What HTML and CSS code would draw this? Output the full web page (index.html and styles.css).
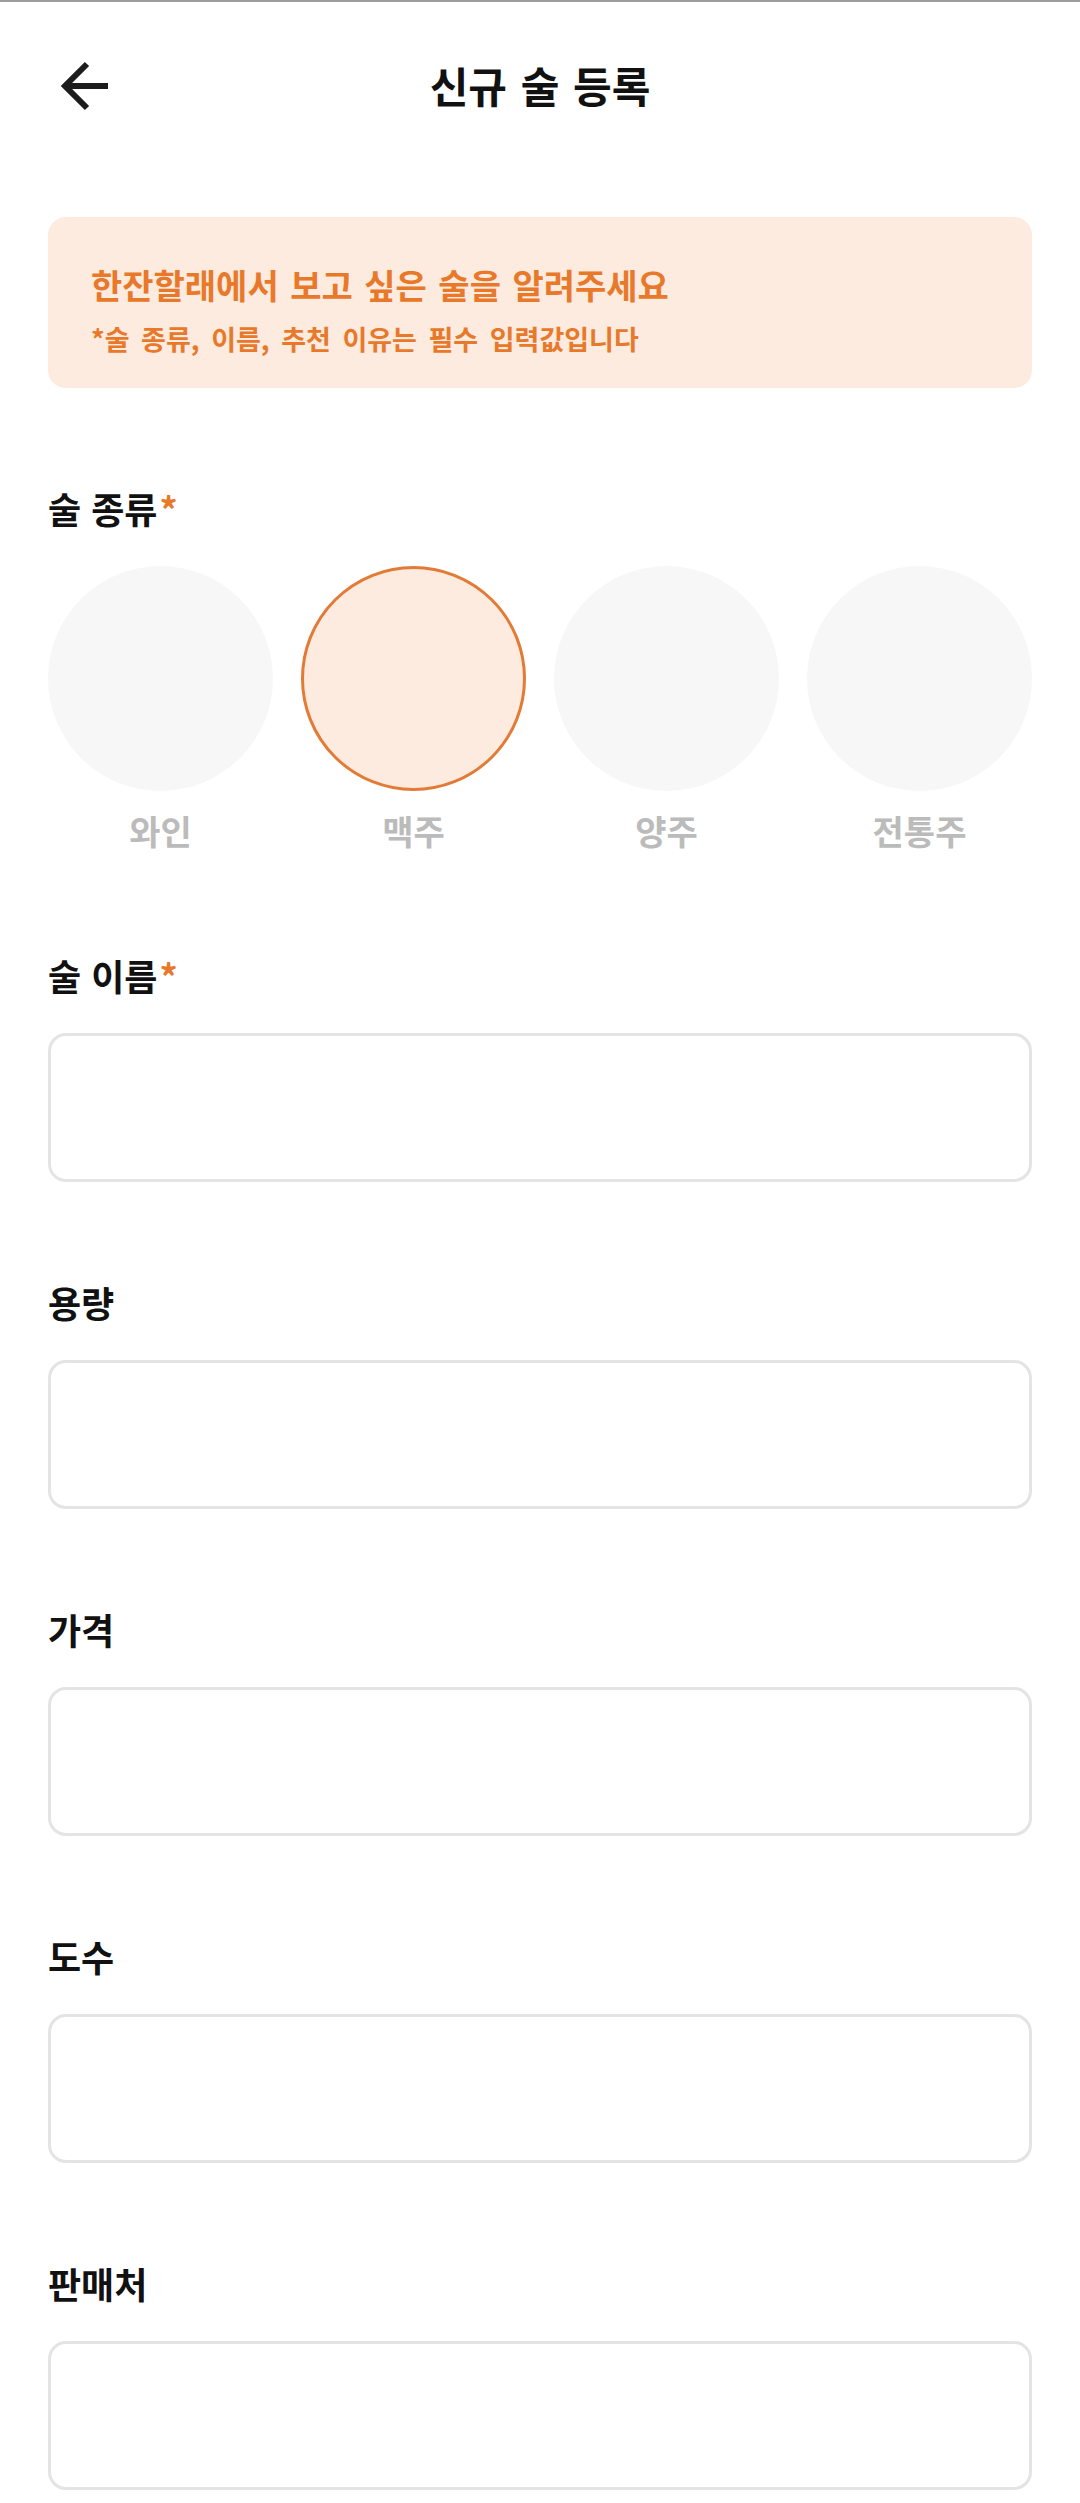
FILE: index.html
```html
<!DOCTYPE html>
<html lang="ko">
<head>
  <meta charset="UTF-8">
  <meta name="viewport" content="width=device-width, initial-scale=1.0">
  <title>신규 술 등록</title>
  <link rel="stylesheet" href="styles.css">
</head>
<body>
  <header class="top-bar">
    <button class="back-button" aria-label="뒤로가기">
      <svg width="64" height="64" viewBox="0 0 64 64">
        <path d="M60 30H19M39 8L17 30L39 52" fill="none" stroke="#1c1c1c" stroke-width="6"/>
      </svg>
    </button>
    <h1>신규 술 등록</h1>
  </header>
  <main class="content">
    <div class="notice">
      <p class="notice-title">한잔할래에서 보고 싶은 술을 알려주세요</p>
      <p class="notice-sub">*술 종류, 이름, 추천 이유는 필수 입력값입니다</p>
    </div>

    <section class="field category-field">
      <span class="field-label">술 종류<span class="required">*</span></span>
      <div class="category-list">
        <button class="category"><span class="category-circle"></span><span class="category-name">와인</span></button>
        <button class="category selected"><span class="category-circle"></span><span class="category-name">맥주</span></button>
        <button class="category"><span class="category-circle"></span><span class="category-name">양주</span></button>
        <button class="category"><span class="category-circle"></span><span class="category-name">전통주</span></button>
      </div>
    </section>

    <section class="field">
      <label class="field-label" for="name">술 이름<span class="required">*</span></label>
      <input class="text-input" type="text" id="name">
    </section>
    <section class="field">
      <label class="field-label" for="volume">용량</label>
      <input class="text-input" type="text" id="volume">
    </section>
    <section class="field">
      <label class="field-label" for="price">가격</label>
      <input class="text-input" type="text" id="price">
    </section>
    <section class="field">
      <label class="field-label" for="abv">도수</label>
      <input class="text-input" type="text" id="abv">
    </section>
    <section class="field">
      <label class="field-label" for="store">판매처</label>
      <input class="text-input" type="text" id="store">
    </section>
  </main>
</body>
</html>
```

FILE: styles.css
```css
* {
  box-sizing: border-box;
}
body {
  margin: 0;
  border-top: 2px solid #9c9c9c;
  font-family: "Noto Sans CJK KR", "Noto Sans", sans-serif;
  color: #111111;
  background: #ffffff;
}
.top-bar {
  display: grid;
  grid-template-columns: 1fr auto 1fr;
  align-items: center;
  height: 172px;
  padding: 0 48px;
}
.back-button {
  justify-self: start;
  display: flex;
  width: 64px;
  height: 64px;
  padding: 0;
  border: none;
  background: none;
}
.top-bar h1 {
  margin: 0 0 6px;
  font-size: 42px;
  font-weight: 700;
  line-height: 1;
  word-spacing: 2px;
}
.content {
  padding: 43px 48px 0;
}
.notice {
  background: #fdebdf;
  border-radius: 18px;
  padding: 48px 43px 32px;
}
.notice p {
  margin: 0;
  color: #e8792b;
  font-weight: 700;
}
.notice-title {
  font-size: 34px;
  line-height: 40px;
  word-spacing: 2px;
}
.notice .notice-sub {
  margin-top: 17px;
  font-size: 27px;
  line-height: 34px;
  word-spacing: 4px;
}
.field {
  margin-top: 100px;
}
.category-field {
  padding-bottom: 4px;
}
.field-label {
  display: block;
  margin-bottom: 38px;
  font-size: 36px;
  line-height: 40px;
  font-weight: 700;
}
.required {
  margin-left: 2px;
  color: #e8792b;
}
.category-list {
  display: grid;
  grid-template-columns: repeat(4, 1fr);
  column-gap: 28px;
}
.category {
  display: flex;
  flex-direction: column;
  align-items: center;
  padding: 0;
  border: none;
  background: none;
  font-family: inherit;
}
.category-circle {
  width: 100%;
  aspect-ratio: 1;
  border-radius: 50%;
  background: #f7f7f7;
}
.category.selected .category-circle {
  background: #fdebdf;
  border: 3px solid #e27b36;
}
.category-name {
  margin-top: 20px;
  font-size: 34px;
  line-height: 40px;
  font-weight: 700;
  color: #bbbbbb;
}
.text-input {
  display: block;
  width: 100%;
  height: 149px;
  border: 3px solid #e4e4e4;
  border-radius: 18px;
  background: #ffffff;
}
```
